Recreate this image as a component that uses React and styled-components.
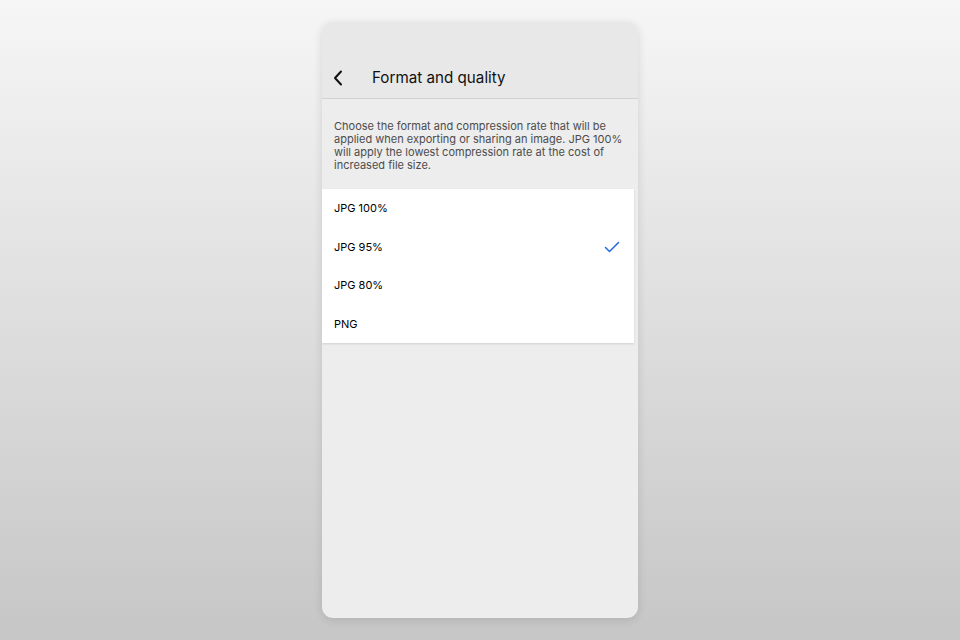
import React from "react"
import styled, { createGlobalStyle } from "styled-components"

const GlobalStyle = createGlobalStyle`
  html, body {
    margin: 0;
    height: 100%;
  }
  body {
    font-family: Inter, "Liberation Sans", sans-serif;
    background: linear-gradient(180deg, #f6f6f6 0%, #c6c6c6 100%);
  }
  #root {
    height: 100%;
  }
`

const Stage = styled.div`
  width: 960px;
  height: 640px;
  display: flex;
  justify-content: center;
  padding-top: 22px;
  box-sizing: border-box;
`

const Phone = styled.div`
  width: 316px;
  height: 596px;
  border-radius: 11px;
  overflow: hidden;
  background: #ededed;
  box-shadow: 0 2px 10px rgba(0, 0, 0, 0.12);
  display: flex;
  flex-direction: column;
`

const Header = styled.div`
  height: 77px;
  flex-shrink: 0;
  box-sizing: border-box;
  background: #e8e8e8;
  border-bottom: 1px solid #d2d2d2;
  display: flex;
  align-items: flex-end;
  padding: 0 0 10px 6px;
`

const BackButton = styled.button`
  width: 20px;
  height: 20px;
  padding: 0;
  border: none;
  background: none;
  display: flex;
  align-items: center;
  justify-content: center;
  margin-right: 24px;
`

const Title = styled.h1`
  margin: 0;
  font-size: 15.2px;
  font-weight: 400;
  color: #111;
  line-height: 20px;
`

const Description = styled.p`
  margin: 0;
  padding: 21px 8px 17px 12px;
  font-size: 11px;
  line-height: 13px;
  color: #4c4c4c;
`

const List = styled.ul`
  list-style: none;
  margin: 0 4px 0 0;
  padding: 0;
  background: #fff;
  box-shadow: 0 1px 2px rgba(0, 0, 0, 0.12);
`

const Row = styled.li`
  height: 38.5px;
  display: flex;
  align-items: center;
  justify-content: space-between;
  padding: 0 14px 0 12px;
  font-size: 11px;
  color: #000;
`

const options = ["JPG 100%", "JPG 95%", "JPG 80%", "PNG"]

function Check() {
  return (
    <svg width="16" height="12" viewBox="0 0 16 12" fill="none">
      <path d="M1.5 6.5 L5.5 10.5 L14.5 1.5" stroke="#2b6de0" strokeWidth="1.6" strokeLinecap="round" strokeLinejoin="round" />
    </svg>
  )
}

export default function App() {
  const selected = "JPG 95%"
  return (
    <>
      <GlobalStyle />
      <Stage>
        <Phone>
          <Header>
            <BackButton>
              <svg width="10" height="16" viewBox="0 0 10 16" fill="none">
                <path d="M8 1.5 L2 8 L8 14.5" stroke="#111" strokeWidth="2" strokeLinecap="round" strokeLinejoin="round" />
              </svg>
            </BackButton>
            <Title>Format and quality</Title>
          </Header>
          <Description>
            Choose the format and compression rate that will be applied when exporting or sharing an image. JPG 100% will apply the lowest compression rate at the cost of increased file size.
          </Description>
          <List>
            {options.map(o => (
              <Row key={o}>
                <span>{o}</span>
                {o === selected && <Check />}
              </Row>
            ))}
          </List>
        </Phone>
      </Stage>
    </>
  )
}
